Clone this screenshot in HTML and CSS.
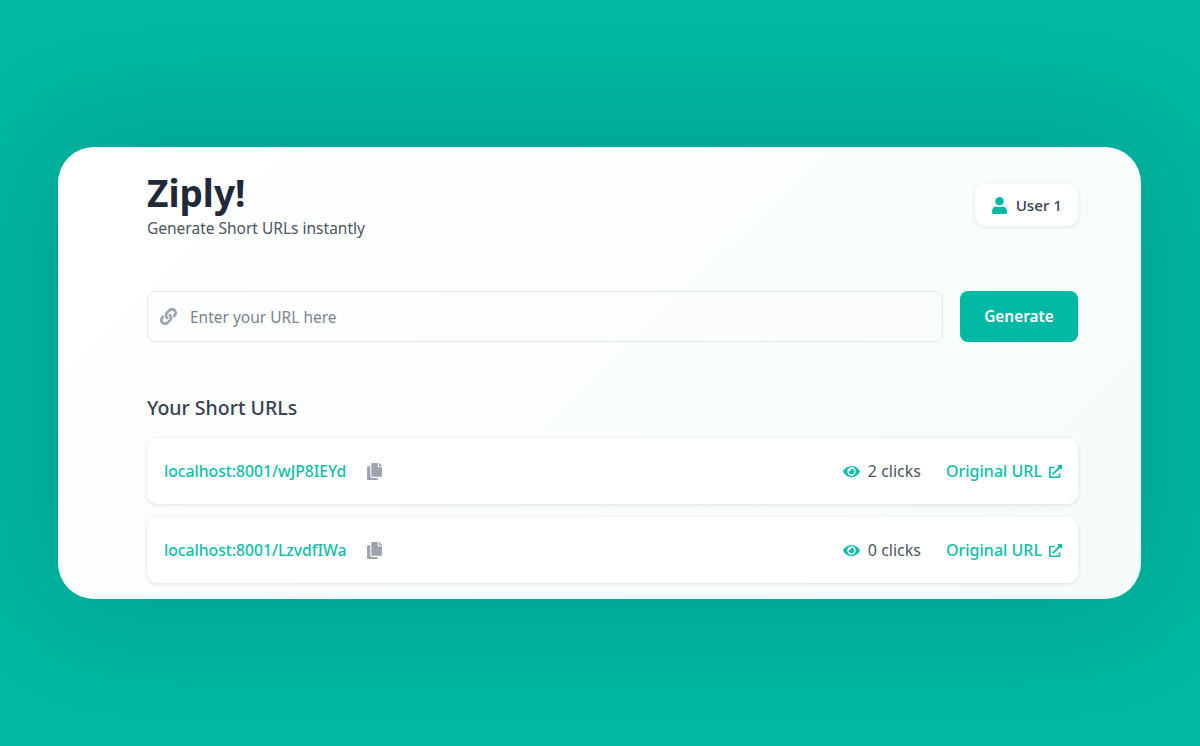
FILE: index.html
```html
<!DOCTYPE html>
<html lang="en">
<head>
  <meta charset="UTF-8" />
  <meta name="viewport" content="width=device-width, initial-scale=1.0" />
  <title>Ziply!</title>
  <link rel="stylesheet" href="styles.css">
</head>
<body>
  <div class="card">
    <div class="header">
      <div>
        <h1>Ziply!</h1>
        <p class="subtitle">Generate Short URLs instantly</p>
      </div>
      <div class="user-chip">
        <svg class="icon-user" viewBox="0 0 448 512"><path d="M224 256c70.7 0 128-57.3 128-128S294.7 0 224 0 96 57.3 96 128s57.3 128 128 128zm89.6 32h-16.7c-22.2 10.2-46.9 16-72.9 16s-50.6-5.8-72.9-16h-16.7C60.2 288 0 348.2 0 422.4V464c0 26.5 21.5 48 48 48h352c26.5 0 48-21.5 48-48v-41.6c0-74.2-60.2-134.4-134.4-134.4z"/></svg>
        <span>User 1</span>
      </div>
    </div>

    <form class="url-form">
      <div class="url-input">
        <svg class="icon-link" viewBox="0 0 512 512"><path d="M326.612 185.391c59.747 59.809 58.927 155.698.36 214.59-.11.12-.24.25-.36.37l-67.2 67.2c-59.27 59.27-155.699 59.262-214.96 0-59.27-59.26-59.27-155.7 0-214.96l37.106-37.106c9.84-9.84 26.786-3.3 27.294 10.606.648 17.722 3.826 35.527 9.69 52.721 1.986 5.822.567 12.262-3.783 16.612l-13.087 13.087c-28.026 28.026-28.905 73.66-1.155 101.96 28.024 28.579 74.086 28.749 102.325.51l67.2-67.19c28.191-28.191 28.073-73.757 0-101.83-3.701-3.694-7.429-6.564-10.341-8.569a16.037 16.037 0 0 1-6.947-12.606c-.396-10.567 3.348-21.456 11.698-29.806l21.054-21.055c5.521-5.521 14.182-6.199 20.584-1.731a152.482 152.482 0 0 1 20.522 17.197zM467.547 44.449c-59.261-59.262-155.69-59.27-214.96 0l-67.2 67.2c-.12.12-.25.25-.36.37-58.566 58.892-59.387 154.781.36 214.59a152.454 152.454 0 0 0 20.521 17.196c6.402 4.468 15.064 3.789 20.584-1.731l21.054-21.055c8.35-8.35 12.094-19.239 11.698-29.806a16.037 16.037 0 0 0-6.947-12.606c-2.912-2.005-6.64-4.875-10.341-8.569-28.073-28.073-28.191-73.639 0-101.83l67.2-67.19c28.239-28.239 74.3-28.069 102.325.51 27.75 28.3 26.872 73.934-1.155 101.96l-13.087 13.087c-4.35 4.35-5.769 10.79-3.783 16.612 5.864 17.194 9.042 34.999 9.69 52.721.509 13.906 17.454 20.446 27.294 10.606l37.106-37.106c59.271-59.259 59.271-155.699.001-214.959z"/></svg>
        <input type="text" placeholder="Enter your URL here">
      </div>
      <button type="button" class="generate-btn">Generate</button>
    </form>

    <h2>Your Short URLs</h2>

    <div class="url-list">
      <div class="url-row">
        <div class="url-left">
          <a class="short-link" href="#">localhost:8001/wJP8IEYd</a>
          <svg class="icon-copy" viewBox="0 0 448 512"><path d="M320 448v40c0 13.255-10.745 24-24 24H24c-13.255 0-24-10.745-24-24V120c0-13.255 10.745-24 24-24h72v296c0 30.879 25.121 56 56 56h168zm0-344V0H152c-13.255 0-24 10.745-24 24v368c0 13.255 10.745 24 24 24h272c13.255 0 24-10.745 24-24V128H344c-13.2 0-24-10.8-24-24zm120.971-31.029L375.029 7.029A24 24 0 0 0 358.059 0H352v96h96v-6.059a24 24 0 0 0-7.029-16.97z"/></svg>
        </div>
        <div class="url-right">
          <span class="clicks">
            <svg class="icon-eye" viewBox="0 0 576 512"><path d="M572.52 241.4C518.29 135.59 410.93 64 288 64S57.68 135.64 3.48 241.41a32.35 32.35 0 0 0 0 29.19C57.71 376.41 165.07 448 288 448s230.32-71.64 284.52-177.41a32.35 32.35 0 0 0 0-29.19zM288 400a144 144 0 1 1 144-144 143.93 143.93 0 0 1-144 144zm0-240a95.31 95.31 0 0 0-25.31 3.79 47.85 47.85 0 0 1-66.9 66.9A95.78 95.78 0 1 0 288 160z"/></svg>
            2 clicks
          </span>
          <a class="original-link" href="#">
            Original URL
            <svg class="icon-external" viewBox="0 0 512 512"><path d="M432,320H400a16,16,0,0,0-16,16V448H64V128H208a16,16,0,0,0,16-16V80a16,16,0,0,0-16-16H48A48,48,0,0,0,0,112V464a48,48,0,0,0,48,48H400a48,48,0,0,0,48-48V336A16,16,0,0,0,432,320ZM488,0h-128c-21.37,0-32.05,25.91-17,41l35.73,35.73L135,320.37a24,24,0,0,0,0,34L157.67,377a24,24,0,0,0,34,0L435.28,133.32,471,169c15,15,41,4.5,41-17V24A24,24,0,0,0,488,0Z"/></svg>
          </a>
        </div>
      </div>

      <div class="url-row">
        <div class="url-left">
          <a class="short-link" href="#">localhost:8001/LzvdfIWa</a>
          <svg class="icon-copy" viewBox="0 0 448 512"><path d="M320 448v40c0 13.255-10.745 24-24 24H24c-13.255 0-24-10.745-24-24V120c0-13.255 10.745-24 24-24h72v296c0 30.879 25.121 56 56 56h168zm0-344V0H152c-13.255 0-24 10.745-24 24v368c0 13.255 10.745 24 24 24h272c13.255 0 24-10.745 24-24V128H344c-13.2 0-24-10.8-24-24zm120.971-31.029L375.029 7.029A24 24 0 0 0 358.059 0H352v96h96v-6.059a24 24 0 0 0-7.029-16.97z"/></svg>
        </div>
        <div class="url-right">
          <span class="clicks">
            <svg class="icon-eye" viewBox="0 0 576 512"><path d="M572.52 241.4C518.29 135.59 410.93 64 288 64S57.68 135.64 3.48 241.41a32.35 32.35 0 0 0 0 29.19C57.71 376.41 165.07 448 288 448s230.32-71.64 284.52-177.41a32.35 32.35 0 0 0 0-29.19zM288 400a144 144 0 1 1 144-144 143.93 143.93 0 0 1-144 144zm0-240a95.31 95.31 0 0 0-25.31 3.79 47.85 47.85 0 0 1-66.9 66.9A95.78 95.78 0 1 0 288 160z"/></svg>
            0 clicks
          </span>
          <a class="original-link" href="#">
            Original URL
            <svg class="icon-external" viewBox="0 0 512 512"><path d="M432,320H400a16,16,0,0,0-16,16V448H64V128H208a16,16,0,0,0,16-16V80a16,16,0,0,0-16-16H48A48,48,0,0,0,0,112V464a48,48,0,0,0,48,48H400a48,48,0,0,0,48-48V336A16,16,0,0,0,432,320ZM488,0h-128c-21.37,0-32.05,25.91-17,41l35.73,35.73L135,320.37a24,24,0,0,0,0,34L157.67,377a24,24,0,0,0,34,0L435.28,133.32,471,169c15,15,41,4.5,41-17V24A24,24,0,0,0,488,0Z"/></svg>
          </a>
        </div>
      </div>
    </div>
  </div>
</body>
</html>
```

FILE: styles.css
```css
* {
  box-sizing: border-box;
}

body {
  font-family: "Noto Sans", sans-serif;
  background: #00b8a3;
  display: flex;
  align-items: center;
  justify-content: center;
  height: 746px;
  margin: 0;
  overflow: hidden;
}

.card {
  width: 1083px;
  height: 452px;
  margin-right: 1px;
  padding: 21px 63px 0 89px;
  border-radius: 36px;
  background: linear-gradient(135deg, #ffffff 0%, #f5fcfa 100%);
  box-shadow: 0 0 120px rgba(0, 60, 50, 0.24);
  overflow: hidden;
}

.header {
  display: flex;
  justify-content: space-between;
  align-items: flex-start;
  height: 123px;
}

h1 {
  margin: 0;
  font-size: 37px;
  line-height: 50px;
  font-weight: 700;
  color: #1f2937;
}

.subtitle {
  margin: 0;
  font-size: 15.5px;
  line-height: 20px;
  color: #4b5563;
}

.user-chip {
  display: flex;
  align-items: center;
  gap: 9px;
  height: 42px;
  margin-top: 16px;
  padding: 0 16px 0 17px;
  background: white;
  border-radius: 10px;
  box-shadow: 0 1px 4px rgba(0, 0, 0, 0.1);
  font-size: 15.2px;
  font-weight: 500;
  color: #374151;
}

.icon-user {
  width: 15px;
  height: 17px;
  fill: #00b8a3;
}

.url-form {
  display: flex;
  gap: 17px;
  height: 51px;
}

.url-input {
  flex: 1;
  display: flex;
  align-items: center;
  gap: 11px;
  padding-left: 12px;
  border: 1px solid #e2e8f0;
  border-radius: 8px;
  background: rgba(255, 255, 255, 0.3);
}

.icon-link {
  width: 17px;
  height: 17px;
  fill: #9ca3af;
}

.url-input input {
  flex: 1;
  border: none;
  outline: none;
  background: transparent;
  font-family: inherit;
  font-size: 15.5px;
  color: #374151;
}

.url-input input::placeholder {
  color: #7b8491;
  opacity: 1;
}

.generate-btn {
  width: 118px;
  border: none;
  border-radius: 8px;
  background: #00b8a3;
  color: white;
  font-family: inherit;
  font-size: 15.4px;
  font-weight: 600;
}

h2 {
  margin: 53px 0 17px;
  font-size: 19.5px;
  line-height: 26px;
  font-weight: 500;
  color: #374151;
}

.url-list {
  display: flex;
  flex-direction: column;
  gap: 13px;
}

.url-row {
  display: flex;
  justify-content: space-between;
  align-items: center;
  height: 66px;
  padding: 0 16px 0 17px;
  background: white;
  border-radius: 10px;
  box-shadow: 0 1px 4px rgba(0, 0, 0, 0.12);
}

.url-left,
.url-right {
  display: flex;
  align-items: center;
}

.url-left {
  gap: 21px;
}

.url-right {
  gap: 25px;
}

.short-link,
.original-link {
  color: #0cbfaa;
  font-size: 16px;
  font-weight: 500;
  text-decoration: none;
}

.short-link {
  font-size: 15.7px;
}

.icon-copy {
  width: 15px;
  height: 17px;
  fill: #9ca3af;
}

.clicks {
  display: flex;
  align-items: center;
  gap: 8px;
  font-size: 16px;
  color: #4b5563;
}

.icon-eye {
  width: 17px;
  height: 15px;
  fill: #0cbfaa;
}

.original-link {
  display: flex;
  align-items: center;
  gap: 7px;
}

.icon-external {
  width: 13px;
  height: 13px;
  fill: #0cbfaa;
}
```
